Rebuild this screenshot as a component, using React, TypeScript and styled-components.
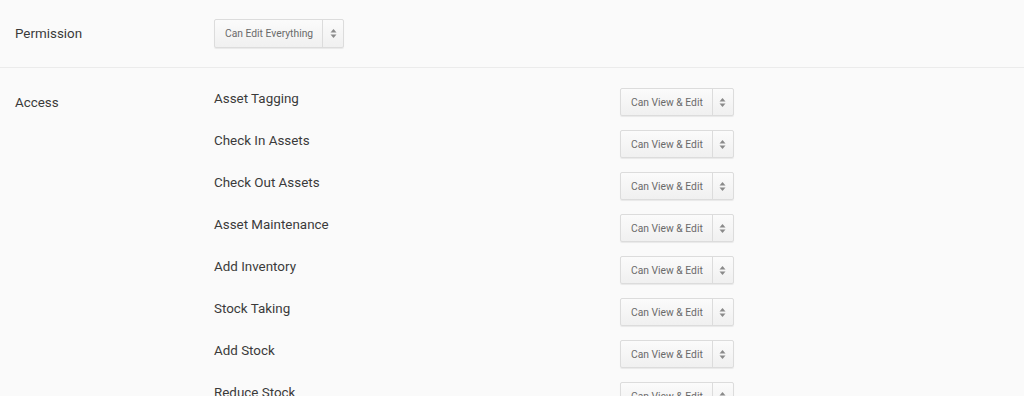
import styled, { createGlobalStyle } from "styled-components";

const GlobalStyle = createGlobalStyle`
  body {
    margin: 0;
    background: #fafafa;
    font-family: Roboto, "Liberation Sans", sans-serif;
    color: #333;
  }
`;

const Page = styled.div`
  width: 1024px;
  height: 396px;
  overflow: hidden;
  background: #fafafa;
`;

const Section = styled.div<{ $divider?: boolean }>`
  display: grid;
  grid-template-columns: 199px 1fr;
  padding: ${(p) => (p.$divider ? "19px 15px" : "20px 15px")};
  border-bottom: ${(p) => (p.$divider ? "1px solid #ebebeb" : "none")};
`;

const Label = styled.div`
  font-size: 13.4px;
  color: #3a3a3a;
  line-height: 29px;
`;

const AccessList = styled.div`
  display: flex;
  flex-direction: column;
  gap: 14px;
`;

const AccessRow = styled.div`
  display: grid;
  grid-template-columns: 406px auto;
  align-items: start;
`;

const ItemName = styled.div`
  font-size: 13.4px;
  color: #3a3a3a;
  line-height: 18px;
  padding-top: 2px;
`;

const Select = styled.div<{ $tall?: boolean }>`
  display: inline-flex;
  align-items: stretch;
  height: ${(p) => (p.$tall ? 29 : 28)}px;
  box-sizing: border-box;
  border: 1px solid #dcdcdc;
  border-radius: 2px;
  background: linear-gradient(#fbfbfb, #f0f0f0);
  box-shadow: 0 1px 1px rgba(0, 0, 0, 0.07);
  font-size: 10.3px;
  color: #6a6a6a;
  cursor: pointer;
`;

const SelectText = styled.span`
  display: flex;
  align-items: center;
  padding: 0 9px 0 10px;
  border-right: 1px solid #dcdcdc;
`;

const Arrows = styled.span`
  display: flex;
  align-items: center;
  justify-content: center;
  width: 20px;
`;

function UpDown() {
  return (
    <svg width="7" height="11" viewBox="0 0 7 11">
      <path d="M3.5 1 L6.5 4.5 H0.5 Z" fill="#8a8a8a" />
      <path d="M3.5 10 L6.5 6.5 H0.5 Z" fill="#8a8a8a" />
    </svg>
  );
}

function Dropdown({ value, tall }: { value: string; tall?: boolean }) {
  return (
    <Select $tall={tall}>
      <SelectText>{value}</SelectText>
      <Arrows>
        <UpDown />
      </Arrows>
    </Select>
  );
}

const items = [
  "Asset Tagging",
  "Check In Assets",
  "Check Out Assets",
  "Asset Maintenance",
  "Add Inventory",
  "Stock Taking",
  "Add Stock",
  "Reduce Stock",
];

export default function App() {
  return (
    <Page>
      <GlobalStyle />
      <Section $divider>
        <Label>Permission</Label>
        <div>
          <Dropdown value="Can Edit Everything" tall />
        </div>
      </Section>
      <Section>
        <Label>Access</Label>
        <AccessList>
          {items.map((name) => (
            <AccessRow key={name}>
              <ItemName>{name}</ItemName>
              <div>
                <Dropdown value="Can View & Edit" />
              </div>
            </AccessRow>
          ))}
        </AccessList>
      </Section>
    </Page>
  );
}
